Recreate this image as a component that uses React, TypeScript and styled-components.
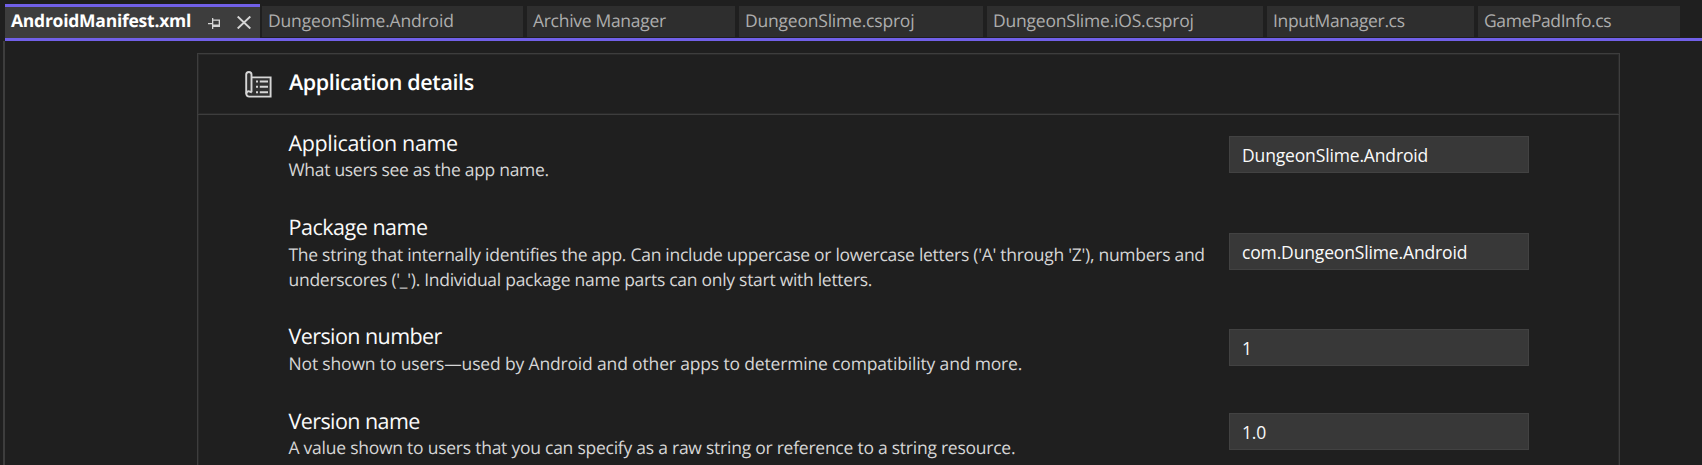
import React from "react";
import styled, { createGlobalStyle } from "styled-components";

const GlobalStyle = createGlobalStyle`
  * { box-sizing: border-box; }
  body {
    margin: 0;
    background: #1f1f1f;
    color: #fafafa;
    font-family: "Segoe UI", "Open Sans", "Noto Sans", sans-serif;
    font-size: 17.5px;
    text-rendering: geometricPrecision;
    overflow: hidden;
  }
`;

const Window = styled.div`
  display: flex;
  flex-direction: column;
  height: 465px;
  padding-left: 3px;
  background: #1f1f1f;
`;

const TabStrip = styled.div`
  display: flex;
  align-items: flex-start;
  height: 41px;
  margin-left: 2px;
  padding-top: 4px;
  border-bottom: 3px solid #7160e8;
`;

const ActiveTab = styled.div`
  display: flex;
  align-items: center;
  flex: none;
  width: 255px;
  height: 34px;
  margin-right: 2px;
  padding: 0 9px 3px 6px;
  background: #3d3d3d;
  border-top: 3px solid #7160e8;
  color: #ffffff;
  font-weight: 700;
  letter-spacing: -0.25px;
  white-space: nowrap;
`;

const ActiveTitle = styled.span`
  flex: 1;
`;

const PinIcon = styled.svg`
  flex: none;
  margin: 4px 17px 0 0;
`;

const CloseIcon = styled.svg`
  flex: none;
  margin-top: 2px;
`;

const Tab = styled.div<{ $width: number; $tracking: number }>`
  display: flex;
  align-items: center;
  flex: none;
  width: ${(p) => p.$width}px;
  height: 31px;
  margin: 2px 4px 0 0;
  padding: 0 5px 1px 6px;
  background: #2e2e2e;
  color: #adadad;
  letter-spacing: ${(p) => p.$tracking}px;
  white-space: nowrap;
`;

const Editor = styled.main`
  flex: 1;
  min-height: 0;
  padding: 12px 82px 0 192px;
  border-left: 2px solid #3d3d3d;
`;

const Panel = styled.section`
  height: 100%;
  border: 1px solid #3d3d3d;
  border-bottom: none;
  box-shadow: inset 1px 1px 0 #292929, inset -1px 0 0 #292929;
`;

const PanelHeader = styled.header`
  display: flex;
  align-items: flex-start;
  gap: 17px;
  height: 61px;
  padding: 17px 0 0 47px;
  border-bottom: 1px solid #3d3d3d;
  box-shadow: inset 0 -1px 0 #292929;
`;

const PanelTitle = styled.h1`
  margin: -2px 0 0;
  color: #ffffff;
  font-size: 21.5px;
  font-weight: 600;
  line-height: 28px;
  letter-spacing: -0.39px;
`;

const FieldList = styled.div`
  display: flex;
  flex-direction: column;
  padding: 15px 90px 0 90.5px;
`;

const Field = styled.div<{ $gap: number }>`
  display: flex;
  align-items: flex-start;
  justify-content: space-between;
  margin-bottom: ${(p) => p.$gap}px;
`;

const Label = styled.label<{ $height: number; $tracking: number }>`
  display: block;
  height: ${(p) => p.$height}px;
  font-size: 21.5px;
  line-height: 28px;
  letter-spacing: ${(p) => p.$tracking}px;
`;

const Description = styled.p<{ $tracking: number }>`
  margin: 0;
  color: #d6d6d6;
  line-height: 25px;
  letter-spacing: ${(p) => p.$tracking}px;
  white-space: pre-line;
`;

const TextInput = styled.input<{ $top: number }>`
  flex: none;
  width: 300px;
  height: 37px;
  margin: ${(p) => p.$top}px 0 0;
  padding: 1px 12px 0;
  background: #383838;
  border: 1px solid #424242;
  border-radius: 0;
  outline: none;
  color: #fafafa;
  font: inherit;
  letter-spacing: -0.15px;
`;

const TABS = [
  { title: "DungeonSlime.Android", width: 261, tracking: -0.17 },
  { title: "Archive Manager", width: 208, tracking: -0.3 },
  { title: "DungeonSlime.csproj", width: 244, tracking: -0.21 },
  { title: "DungeonSlime.iOS.csproj", width: 276, tracking: -0.21 },
  { title: "InputManager.cs", width: 207, tracking: -0.36 },
  { title: "GamePadInfo.cs", width: 202, tracking: -0.4 },
];

const FIELDS = [
  {
    id: "app-name",
    label: "Application name",
    labelTracking: -0.35,
    text: "What users see as the app name.",
    value: "DungeonSlime.Android",
    labelHeight: 28,
    gap: 31,
    inputTop: 6,
    tracking: -0.3,
  },
  {
    id: "package-name",
    label: "Package name",
    labelTracking: -0.48,
    text:
      "The string that internally identifies the app. Can include uppercase or lowercase letters ('A' through 'Z'), numbers and\n" +
      "underscores ('_'). Individual package name parts can only start with letters.",
    value: "com.DungeonSlime.Android",
    labelHeight: 29,
    gap: 30,
    inputTop: 19,
    tracking: -0.28,
  },
  {
    id: "version-number",
    label: "Version number",
    labelTracking: -0.58,
    text: "Not shown to users—used by Android and other apps to determine compatibility and more.",
    value: "1",
    labelHeight: 29,
    gap: 31,
    inputTop: 6,
    tracking: -0.16,
  },
  {
    id: "version-name",
    label: "Version name",
    labelTracking: -0.58,
    text: "A value shown to users that you can specify as a raw string or reference to a string resource.",
    value: "1.0",
    labelHeight: 28,
    gap: 0,
    inputTop: 5,
    tracking: -0.245,
  },
];

const ManifestIcon = () => (
  <svg width="27" height="27" viewBox="0 0 27 27" fill="none" stroke="#d6d6d6" strokeWidth="1.9">
    <path d="M6.5 6.4H25.6V25.6H4.2A3 3 0 0 1 1.2 22.6V3.6A2.65 2.65 0 0 1 6.5 3.6V21.2" fill="#303030" />
    <path d="M1.4 22.6C1.6 20.6 3.2 20 4.2 20.4C5.2 20.8 5.6 21.2 6.8 21.2" />
    <path d="M11 10.5H13M11 15.7H13M11 21.3H13M14.8 10.5H23M14.8 15.7H23M14.8 21.3H23" />
  </svg>
);

export default function App() {
  return (
    <>
      <GlobalStyle />
      <Window>
        <TabStrip>
          <ActiveTab>
            <ActiveTitle>AndroidManifest.xml</ActiveTitle>
            <PinIcon width="12" height="11" viewBox="0 0 12 11" fill="#d6d6d6">
              <path d="M0 5H4V0H5.3V1.5H12V9H5.3V11H4V6.3H0ZM5.3 2.8V6.5H10.7V2.8Z" fillRule="evenodd" />
            </PinIcon>
            <CloseIcon width="14" height="13" viewBox="0 0 14 13" stroke="#d6d6d6" strokeWidth="1.9">
              <path d="M0.7 0.5L13.3 12.5M13.3 0.5L0.7 12.5" />
            </CloseIcon>
          </ActiveTab>
          {TABS.map((t) => (
            <Tab key={t.title} $width={t.width} $tracking={t.tracking}>
              {t.title}
            </Tab>
          ))}
        </TabStrip>
        <Editor>
          <Panel>
            <PanelHeader>
              <ManifestIcon />
              <PanelTitle>Application details</PanelTitle>
            </PanelHeader>
            <FieldList>
              {FIELDS.map((f) => (
                <Field key={f.id} $gap={f.gap}>
                  <div>
                    <Label htmlFor={f.id} $height={f.labelHeight} $tracking={f.labelTracking}>
                      {f.label}
                    </Label>
                    <Description $tracking={f.tracking}>{f.text}</Description>
                  </div>
                  <TextInput id={f.id} defaultValue={f.value} $top={f.inputTop} />
                </Field>
              ))}
            </FieldList>
          </Panel>
        </Editor>
      </Window>
    </>
  );
}
